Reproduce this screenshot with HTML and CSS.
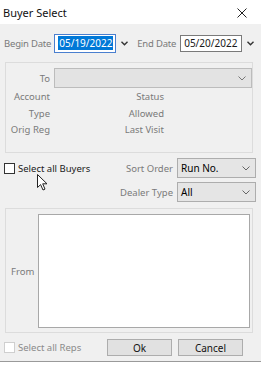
FILE: index.html
```html
<!DOCTYPE html>
<html lang="en">
<head>
    <meta charset="UTF-8">
    <title>Buyer Select</title>
    <link rel="stylesheet" href="styles.css">
</head>
<body>
    <div class="dialog">
        <!-- Title bar -->
        <div class="titlebar">
            <span class="title">Buyer Select</span>
            <svg class="close" width="10" height="10" viewBox="0 0 10 10"><path d="M0.5 0.5 L9.5 9.5 M9.5 0.5 L0.5 9.5" stroke="#222" stroke-width="1"/></svg>
        </div>

        <div class="content">
            <div class="date-row">
                <label class="muted">Begin Date</label>
                <div class="date-box begin"><span class="selected">05/19/2022</span></div>
                <span class="drop">
                    <svg width="7" height="5" viewBox="0 0 7 5"><path d="M0.5 0.8 L3.5 3.8 L6.5 0.8" fill="none" stroke="#333" stroke-width="1.4"/></svg>
                </span>
                <label class="muted end-label">End Date</label>
                <div class="date-box end">05/20/2022</div>
                <span class="drop">
                    <svg width="7" height="5" viewBox="0 0 7 5"><path d="M0.5 0.8 L3.5 3.8 L6.5 0.8" fill="none" stroke="#333" stroke-width="1.4"/></svg>
                </span>
            </div>

            <div class="group buyer-info">
                <div class="to-row">
                    <label class="muted">To</label>
                    <div class="combo disabled">
                        <span></span>
                        <svg width="8" height="5" viewBox="0 0 8 5"><path d="M0.5 0.5 L4 4 L7.5 0.5" fill="none" stroke="#777" stroke-width="1"/></svg>
                    </div>
                </div>
                <div class="info-grid">
                    <span class="muted">Account</span><span class="muted">Status</span>
                    <span class="muted">Type</span><span class="muted">Allowed</span>
                    <span class="muted">Orig Reg</span><span class="muted">Last Visit</span>
                </div>
            </div>

            <div class="options-row">
                <label class="check-label">
                    <span class="checkbox"></span>
                    Select all Buyers
                </label>
                <div class="sort-fields">
                    <div class="field">
                        <label class="muted">Sort Order</label>
                        <div class="combo">
                            <span>Run No.</span>
                            <svg width="8" height="5" viewBox="0 0 8 5"><path d="M0.5 0.5 L4 4 L7.5 0.5" fill="none" stroke="#666" stroke-width="1"/></svg>
                        </div>
                    </div>
                    <div class="field">
                        <label class="muted">Dealer Type</label>
                        <div class="combo">
                            <span>All</span>
                            <svg width="8" height="5" viewBox="0 0 8 5"><path d="M0.5 0.5 L4 4 L7.5 0.5" fill="none" stroke="#666" stroke-width="1"/></svg>
                        </div>
                    </div>
                </div>
                <!-- mouse pointer from the capture -->
                <svg class="pointer" width="11" height="17" viewBox="0 0 11 17">
                    <path d="M0.5 0.5 L0.5 13.5 L3.6 10.6 L6 16 L8 15.1 L5.7 9.8 L10 9.8 Z" fill="#fff" stroke="#222" stroke-width="1"/>
                </svg>
            </div>

            <div class="group from-group">
                <label class="muted">From</label>
                <div class="listbox"></div>
            </div>

            <div class="footer">
                <label class="check-label disabled">
                    <span class="checkbox"></span>
                    Select all Reps
                </label>
                <div class="buttons">
                    <button>Ok</button>
                    <button>Cancel</button>
                </div>
            </div>
        </div>
    </div>
</body>
</html>
```
FILE: styles.css
```css
* {
    box-sizing: border-box;
}

body {
    margin: 0;
    background: #fff;
    font-family: 'Segoe UI', 'Noto Sans', sans-serif;
    font-size: 9.5px;
    color: #1a1a1a;
    white-space: nowrap;
}

.dialog {
    width: 261px;
    height: 362px;
    background: #f0f0f0;
    border-bottom: 1px solid #9a9a9a;
}

/* Title bar */
.titlebar {
    height: 24px;
    background: #fff;
    display: flex;
    align-items: center;
    justify-content: space-between;
    padding: 0 14px 0 3px;
}

.title {
    font-size: 11px;
    color: #111;
}

.close {
    margin-top: 1px;
}

.content {
    padding: 9px 5px 0 4px;
}

.muted {
    color: #7a7a7a;
}

label {
    flex-shrink: 0;
}

/* Dates */
.date-row {
    display: flex;
    align-items: center;
    height: 20px;
}

.date-row label {
    letter-spacing: -0.2px;
}

.date-box {
    flex-shrink: 0;
    height: 19px;
    border: 1px solid #7a7a7a;
    background: #fff;
    display: flex;
    align-items: center;
    font-size: 10px;
    width: 62px;
    padding-left: 3px;
}

.date-box.begin {
    margin-left: 3px;
    border-color: #4a7fcf;
}

.selected {
    background: #0078d7;
    color: #fff;
    padding: 0 1px;
}

.date-box.end {
    margin-left: 4px;
    height: 17px;
}

.drop {
    display: flex;
    margin-left: 5px;
}

.end-label {
    margin-left: 9px;
}

/* Group boxes */
.group {
    border: 1px solid #dcdcdc;
    width: 248px;
    margin-left: 1px;
}

.buyer-info {
    margin-top: 9px;
    height: 91px;
    padding: 5px 0 0 0;
}

.to-row {
    display: flex;
    align-items: center;
}

.to-row label {
    width: 44px;
    text-align: right;
}

.combo {
    height: 20px;
    border: 1px solid #adadad;
    background: #e5e5e5;
    display: flex;
    align-items: center;
    justify-content: space-between;
    padding: 0 5px 0 3px;
    font-size: 10px;
    color: #000;
}

.to-row .combo {
    width: 198px;
    margin-left: 4px;
}

.combo.disabled {
    border-color: #bcbcbc;
    background: #e3e3e3;
}

.info-grid {
    display: grid;
    grid-template-columns: 44px 114px;
    row-gap: 3px;
    margin-top: 2px;
    line-height: 13.5px;
}

.info-grid span {
    text-align: right;
}

/* Options */
.options-row {
    position: relative;
    display: flex;
    justify-content: space-between;
    margin-top: 5px;
    height: 50px;
}

.check-label {
    display: flex;
    align-items: center;
    gap: 3px;
    height: 14px;
    margin-top: 3px;
}

.checkbox {
    width: 11px;
    height: 11px;
    border: 1px solid #333;
    background: #fff;
}

.check-label.disabled {
    color: #8a8a8a;
}

.check-label.disabled .checkbox {
    border-color: #cfcfcf;
}

.sort-fields {
    display: flex;
    flex-direction: column;
    gap: 4px;
}

.field {
    display: flex;
    align-items: center;
    justify-content: flex-end;
    gap: 4px;
}

.field .combo {
    width: 79px;
}

.pointer {
    position: absolute;
    left: 33px;
    top: 16px;
}

.from-group {
    height: 125px;
    display: flex;
    align-items: center;
    padding: 5px 2px 4px 5px;
    gap: 4px;
}

.listbox {
    flex: 1;
    height: 100%;
    border: 1px solid #a8a8a8;
    background: #fff;
}

/* Footer */
.footer {
    display: flex;
    justify-content: space-between;
    align-items: center;
    margin-top: 6px;
    padding-right: 13px;
}

.footer .check-label {
    margin-top: 0;
}

.buttons {
    display: flex;
    gap: 6px;
}

button {
    width: 65px;
    height: 17px;
    border: 1px solid #adadad;
    background: #e1e1e1;
    font-family: inherit;
    font-size: 10px;
    color: #111;
    padding: 0;
}
```
